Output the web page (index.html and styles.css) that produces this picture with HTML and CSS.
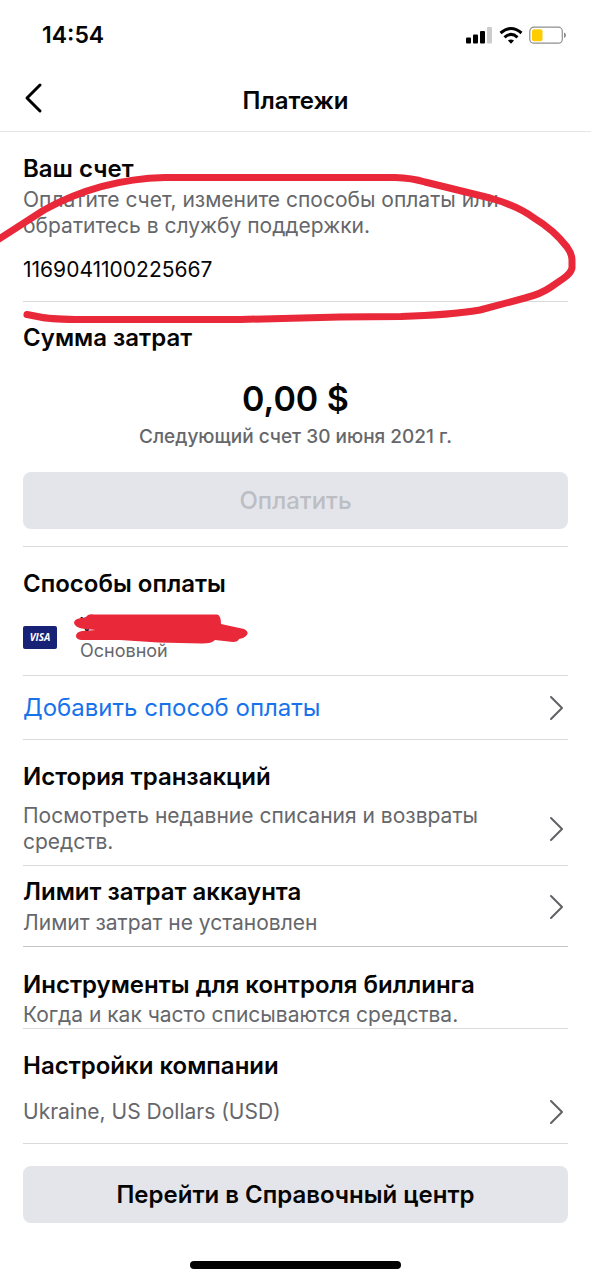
FILE: index.html
```html
<!DOCTYPE html>
<html lang="ru">
<head>
<meta charset="utf-8">
<meta name="viewport" content="width=device-width, initial-scale=1">
<title>Платежи</title>
<link rel="stylesheet" href="styles.css">
</head>
<body>
<div class="status">
  <time class="clock">14:54</time>
  <svg class="status-icons" width="102" height="20" viewBox="0 0 102 20" aria-hidden="true">
    <rect x="1" y="12.500" width="5" height="6" rx="1"/>
    <rect x="8" y="9.500" width="5" height="9" rx="1"/>
    <rect x="15" y="6" width="5" height="12.500" rx="1"/>
    <rect x="22" y="2" width="5" height="16.500" rx="1" fill="#ccc"/>
    <g fill="none" stroke="#000" stroke-width="3">
      <path d="M35.500 8Q46 -1 56.500 8"/>
      <path d="M39.500 12.300Q46 6.500 52.500 12.300"/>
    </g>
    <path d="M43 15.500Q46 13.500 49 15.500L46 18.800Z"/>
    <rect x="64.800" y="2.200" width="32.500" height="16" rx="4" fill="#fff" stroke="#8e8e8e" stroke-width="1.200"/>
    <rect x="67" y="4.200" width="10.500" height="12" rx="2" fill="#fc0"/>
    <path d="M99 7.500q2 .5 2 2.700t-2 2.700z" fill="#8e8e8e"/>
  </svg>
</div>
<header class="topbar">
  <button class="back" type="button" aria-label="Назад">
    <svg width="20" height="32" viewBox="0 0 20 32" aria-hidden="true"><path d="M17 3L4 16L17 29"/></svg>
  </button>
  <h1 class="page-title">Платежи</h1>
</header>
<main class="content">
  <section class="section account">
    <h2 class="title">Ваш счет</h2>
    <p class="text">Оплатите счет, измените способы оплаты или обратитесь в службу поддержки.</p>
    <p class="number">1169041100225667</p>
    <svg class="circle-mark" width="591" height="160" viewBox="0 170 591 160" aria-hidden="true">
      <path d="M-4 241L44 210Q100 179 165 177.500L395 177.500Q412 178 425 182L490 198Q518 206 534 218Q554 230 567 247Q572 254 572 260V268Q571 273 564 278L551 287Q541 294 525 298L480 310Q450 315 401 316.500L340 317L240 319.500H75Q48 319 40 317L27 314.500"/>
    </svg>
  </section>
  <section class="section spend">
    <h2 class="title">Сумма затрат</h2>
    <p class="amount">0,00 $</p>
    <p class="due">Следующий счет 30 июня 2021 г.</p>
    <button class="button" type="button" disabled>Оплатить</button>
  </section>
  <section class="section methods">
    <h2 class="title">Способы оплаты</h2>
    <div class="card">
      <svg class="visa" width="34" height="23" viewBox="0 0 34 23" role="img" aria-label="Visa">
        <rect width="34" height="23" rx="2" fill="#172277"/>
        <text x="17" y="15" text-anchor="middle">VISA</text>
      </svg>
      <div class="card-info">
        <p class="card-name">Visa</p>
        <p class="card-note">Основной</p>
        <svg class="scribble" width="176" height="32" viewBox="73 613 176 32" aria-hidden="true">
          <path d="M88 615Q90 614 94 614.500H217Q221 615 221 624L244 629Q250 632 246 636Q243 639 239 639Q238 642 233 642L215 640Q212 643.500 202 643.500L158 642.500L120 640H81Q76 639 76 636Q76 632 82 631L96 630L85 629Q75 628 74 623Q74 619 81 618Q86 618 88 615Z"/>
        </svg>
      </div>
    </div>
  </section>
  <a class="section row add" href="#add">Добавить способ оплаты
    <svg class="chevron" width="16" height="26" viewBox="0 0 16 26" aria-hidden="true"><path d="M2 2L13 13L2 24"/></svg>
  </a>
  <section class="section history">
    <h2 class="title">История транзакций</h2>
    <a class="row" href="#history"><span class="text">Посмотреть недавние списания и возвраты средств.</span>
      <svg class="chevron" width="16" height="26" viewBox="0 0 16 26" aria-hidden="true"><path d="M2 2L13 13L2 24"/></svg>
    </a>
  </section>
  <section class="section limit">
    <a class="row" href="#limit">
      <div>
        <h2 class="title">Лимит затрат аккаунта</h2>
        <p class="text">Лимит затрат не установлен</p>
      </div>
      <svg class="chevron" width="16" height="26" viewBox="0 0 16 26" aria-hidden="true"><path d="M2 2L13 13L2 24"/></svg>
    </a>
  </section>
  <section class="section tools">
    <h2 class="title">Инструменты для контроля биллинга</h2>
    <p class="text">Когда и как часто списываются средства.</p>
  </section>
  <section class="section company">
    <h2 class="title">Настройки компании</h2>
    <a class="row" href="#company"><span class="text">Ukraine, US Dollars (USD)</span>
      <svg class="chevron" width="16" height="26" viewBox="0 0 16 26" aria-hidden="true"><path d="M2 2L13 13L2 24"/></svg>
    </a>
  </section>
  <button class="button help" type="button">Перейти в Справочный центр</button>
</main>
<div class="home-bar"></div>
</body>
</html>
```
FILE: styles.css
```css
* { box-sizing: border-box; }
body {
  margin: 0;
  overflow-x: hidden;
  background: #fff;
  color: #050505;
  font-family: Inter, "Liberation Sans", sans-serif;
}
h1, h2, p { margin: 0; }
a { color: inherit; text-decoration: none; }
svg { display: block; flex: none; }

.status {
  display: flex;
  align-items: center;
  justify-content: space-between;
  height: 70px;
  padding: 0 24px 0 42px;
}
.clock { font-size: 23px; font-weight: 600; }

.topbar {
  display: grid;
  grid-template-columns: 56px 1fr 56px;
  align-items: center;
  height: 62px;
  border-bottom: 1px solid #e4e5e7;
}
.back {
  height: 56px;
  padding: 0 0 6px 23px;
  border: 0;
  background: none;
}
.back path { fill: none; stroke: #000; stroke-width: 3; stroke-linecap: round; stroke-linejoin: round; }
.page-title { font-size: 24px; line-height: 30px; font-weight: 600; text-align: center; }

.content { padding: 0 23px; }
.section { border-bottom: 1px solid #d8dadd; }
.title { font-size: 24px; line-height: 30px; font-weight: 600; }
.text { color: #65676b; font-size: 21px; line-height: 26px; }
.row { display: flex; align-items: center; justify-content: space-between; gap: 48px; padding-right: 3px; }
.chevron path { fill: none; stroke: #606266; stroke-width: 2; stroke-linecap: round; stroke-linejoin: round; }

.account { position: relative; padding: 22px 0 18px; }
.account .text { margin-top: 3px; }
.number { margin-top: 18px; font-size: 21px; line-height: 26px; }
.circle-mark { position: absolute; top: 38px; left: -23px; z-index: 1; }
.circle-mark path { fill: none; stroke: #e92839; stroke-width: 7; stroke-linecap: round; stroke-linejoin: round; }

.spend { padding: 21px 0 17px; }
.amount { margin-top: 26px; font-size: 34px; line-height: 40px; font-weight: 600; text-align: center; }
.due { margin-top: 6px; color: #65676b; font-size: 19px; line-height: 24px; font-weight: 500; text-align: center; }
.button {
  display: block;
  width: 100%;
  height: 57px;
  padding: 0;
  border: 0;
  border-radius: 8px;
  background: #e4e5ea;
  color: #050505;
  font: 600 24px/30px Inter, "Liberation Sans", sans-serif;
}
.button:disabled { color: #bcbec3; font-weight: 500; }
.spend .button { margin-top: 23px; }

.methods { padding: 22px 0 12px; }
.card { display: flex; align-items: center; gap: 23px; margin-top: 12px; }
.visa text { fill: #fff; font: italic 700 10px "Open Sans", sans-serif; }
.card-info { position: relative; }
.card-name { font-size: 20px; line-height: 28px; }
.card-note { color: #65676b; font-size: 18px; line-height: 24px; }
.scribble { position: absolute; top: 2px; left: -7px; fill: #e92839; }

.add { height: 64px; color: #1873eb; font-size: 24px; }
.history { padding: 22px 0 10px; }
.history .row { margin-top: 11px; }
.limit { padding: 11px 0 10px; border-color: #c4c6c9; }
.limit .text { margin-top: 3px; }
.tools { padding-top: 23px; }
.tools .text { margin-top: 2px; }
.company { padding: 22px 0 18px; }
.company .row { margin-top: 18px; }
.help { margin-top: 22px; }

.home-bar { width: 211px; height: 8px; margin: 38px auto 11px; border-radius: 4px; background: #000; }
```
